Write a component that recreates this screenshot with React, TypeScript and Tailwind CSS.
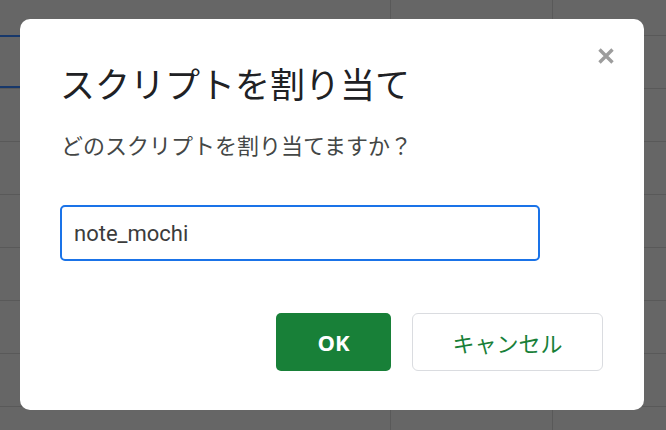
import React from "react"

const rows = [36, 53, 53, 53, 53, 53, 53, 53, 53]

function SheetBackdrop() {
  return (
    <div className="flex flex-col w-full h-full bg-[#666666]">
      {rows.map((h, i) => (
        <div key={i} className="flex shrink-0 border-b border-[#595959]" style={{ height: h }}>
          <div
            className={
              i === 1
                ? "w-[391px] shrink-0 border-r border-[#595959] border-t-2 border-b-2 border-t-[#17386b] border-b-[#17386b] -mt-px"
                : "w-[391px] shrink-0 border-r border-[#595959]"
            }
          />
          <div className="w-[162px] shrink-0 border-r border-[#595959]" />
          <div className="flex-1" />
        </div>
      ))}
    </div>
  )
}

export default function App() {
  return (
    <div className="relative w-[666px] h-[430px] overflow-hidden" style={{ fontFamily: "Roboto, 'Noto Sans CJK JP', sans-serif" }}>
      <SheetBackdrop />

      {/* ダイアログ */}
      <div className="absolute left-[20px] top-[19px] w-[624px] h-[391px] bg-white rounded-[10px] flex flex-col px-[40px]">
        <button className="absolute right-[29px] top-[28px] w-[18px] h-[18px] flex items-center justify-center">
          <svg width="18" height="18" viewBox="0 0 18 18">
            <path d="M2.5 2.5 L15.5 15.5 M15.5 2.5 L2.5 15.5" stroke="#9d9d9d" strokeWidth="3.4" strokeLinecap="butt" />
          </svg>
        </button>

        <h2
          className="mt-[44px] text-[35px] leading-[40px] text-[#202124] font-normal"
          style={{ fontFamily: "'Noto Sans CJK JP', sans-serif" }}
        >
          スクリプトを割り当て
        </h2>

        <p
          className="mt-[27px] ml-[1px] text-[22px] leading-[28px] text-[#444746]"
          style={{ fontFamily: "'Noto Sans CJK JP', sans-serif" }}
        >
          どのスクリプトを割り当てますか？
        </p>

        <input
          defaultValue="note_mochi"
          className="mt-[47px] w-[480px] h-[56px] border-[2.5px] border-[#1a73e8] rounded-[5px] pl-[12px] text-[22px] text-[#3c3c3c] outline-none"
          style={{ fontFamily: "Roboto, sans-serif" }}
        />

        <div className="mt-[52px] flex justify-end gap-[21px] pr-[1px]">
          <button
            className="w-[115px] h-[58px] rounded-[5px] bg-[#188038] text-white text-[22px] font-bold"
            style={{ fontFamily: "'Open Sans', sans-serif" }}
          >
            OK
          </button>
          <button
            className="w-[191px] h-[58px] rounded-[6px] border border-[#dadce0] bg-white text-[#188038] text-[22px]"
            style={{ fontFamily: "'Noto Sans CJK JP', sans-serif" }}
          >
            キャンセル
          </button>
        </div>
      </div>
    </div>
  )
}
